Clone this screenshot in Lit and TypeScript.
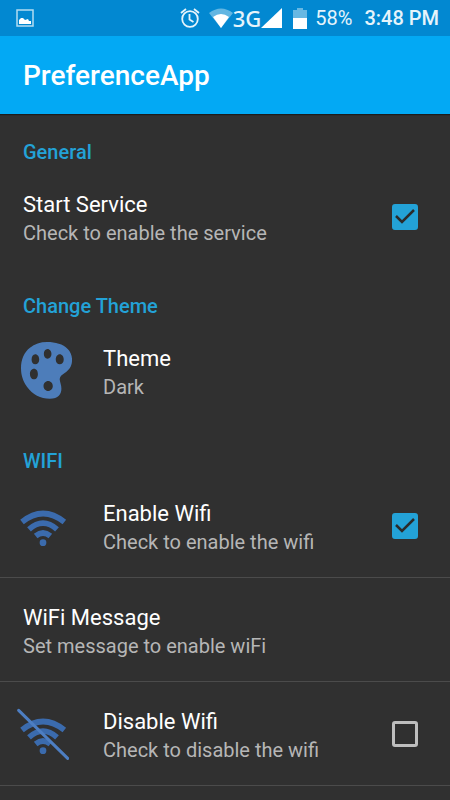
import { LitElement, html, css, nothing, svg } from "lit";
import { customElement, property } from "lit/decorators.js";

const paletteIcon = html`<svg class="palette" viewBox="33 38 154 171" preserveAspectRatio="none" aria-hidden="true">
  <path fill="#4d7dba" fill-rule="evenodd" d="M112 38C137 38 160 44 174 59C184 69 188 82 187 96C186 112 177 124 165 131C155 137 149 143 150 151C151 160 155 166 155 178C155 194 146 208 120 208C92 208 68 196 51 172C38 154 33 136 33 116C33 91 42 69 60 55C74 44 91 38 112 38Z
  M113 59C106 59 102 66 102 74C102 82 106 88 113 88C120 88 125 82 125 74C125 66 120 59 113 59Z
  M76 75C69 75 65 82 65 91C65 99 69 105 76 105C83 105 88 99 88 91C88 82 83 75 76 75Z
  M150 75C143 75 138 82 138 91C138 99 143 105 150 105C157 105 162 99 162 91C162 82 157 75 150 75Z
  M72 118C65 118 60 125 60 134C60 143 65 150 72 150C80 150 84 143 84 134C84 125 80 118 72 118Z
  M115 155C107 155 101 162 101 170C101 178 107 185 115 185C123 185 129 178 129 170C129 162 123 155 115 155Z"/>
</svg>`;

const wifiShape = svg`<g fill="none" stroke="#3b6bad" stroke-width="17">
    <path d="M36 95Q99 44 163 95"/>
    <path d="M57 117Q99 80 141 117"/>
    <path d="M77 137Q99 119 121 137"/>
  </g>
  <circle cx="99" cy="157" r="10" fill="#3b6bad"/>`;

const wifiIcon = html`<svg class="wifi" viewBox="21 29 156 156" aria-hidden="true">${wifiShape}</svg>`;

const wifiOffIcon = html`<svg class="wifi" viewBox="21 24 156 156" aria-hidden="true">
  <g transform="translate(0 -5)">${wifiShape}</g>
  <path d="M26 31L173 175" stroke="#4d7ec2" stroke-width="9" stroke-linecap="round"/>
</svg>`;

const icons = { palette: paletteIcon, wifi: wifiIcon, "wifi-off": wifiOffIcon };

@customElement("preference-row")
class PreferenceRow extends LitElement {
  @property() heading = "";
  @property() summary = "";
  @property() icon: keyof typeof icons | "" = "";
  @property({ type: Boolean }) checkable = false;
  @property({ type: Boolean }) checked = false;

  static styles = css`
    :host { display: block; }
    .row {
      box-sizing: border-box;
      width: 100%;
      min-height: 103px;
      padding: 0 32px 0 23px;
      display: flex;
      align-items: center;
      border: 0;
      background: none;
      color: inherit;
      font: inherit;
      text-align: left;
    }
    .icon { flex: none; width: 80px; display: flex; }
    .palette { width: 51px; height: 57px; margin-left: -2px; }
    .wifi { width: 52px; height: 52px; margin-left: -6px; }
    .text { flex: 1; display: flex; flex-direction: column; padding-top: 4px; }
    .heading { font-size: 22px; line-height: 29px; color: #fff; }
    .summary { font-size: 20px; line-height: 28px; color: #b6b6b6; }
    .box {
      appearance: none;
      box-sizing: border-box;
      width: 26px;
      height: 26px;
      margin: 0;
      border: 3px solid #bebebe;
      border-radius: 3px;
    }
    .box:checked { border-color: #23a2d7; background: #23a2d7; }
    .control { display: grid; place-items: center; }
    .control > * { grid-area: 1 / 1; }
    .tick { width: 26px; height: 26px; pointer-events: none; visibility: hidden; }
    .box:checked + .tick { visibility: visible; }
  `;

  render() {
    const content = html`
      ${this.icon ? html`<span class="icon">${icons[this.icon]}</span>` : nothing}
      <span class="text">
        <span class="heading">${this.heading}</span>
        <span class="summary">${this.summary}</span>
      </span>`;
    if (!this.checkable) return html`<button class="row">${content}</button>`;
    return html`<label class="row">
      ${content}
      <span class="control">
        <input class="box" type="checkbox" .checked=${this.checked} />
        <svg class="tick" viewBox="0 0 26 26" aria-hidden="true">
          <path d="M4 12L10 18L22 6" fill="none" stroke="#2b2b2b" stroke-width="2.5"/>
        </svg>
      </span>
    </label>`;
  }
}

@customElement("status-bar")
class StatusBar extends LitElement {
  static styles = css`
    :host {
      display: flex;
      align-items: center;
      box-sizing: border-box;
      height: 36px;
      padding: 0 11px 0 16px;
      background: #0288d1;
      color: #e6f4fb;
    }
    svg { flex: none; display: block; }
    .picture { width: 18px; height: 18px; margin-right: auto; }
    .alarm { width: 20px; height: 20px; margin-right: 9px; }
    .wifi { width: 24px; height: 20px; }
    .network { font: 500 22px/36px "Noto Sans", sans-serif; }
    .signal { width: 21px; height: 20px; margin-right: 11px; }
    .battery { width: 14px; height: 21px; margin-right: 8px; }
    .percent { font-size: 20px; line-height: 36px; margin-right: 12px; }
    .time { font-size: 20px; line-height: 36px; font-weight: 500; }
  `;

  render() {
    return html`
      <svg class="picture" viewBox="0 0 18 18" aria-hidden="true">
        <rect x="1" y="1" width="16" height="16" fill="none" stroke="#b3dbf1" stroke-width="1.5"/>
        <path d="M3 15V11L5 9L7 9L9 11L12 10L13 12L15 12V15Z" fill="#fff"/>
      </svg>
      <svg class="alarm" viewBox="0 0 20 20" fill="none" stroke="#e6f4fb" stroke-width="1.8" aria-hidden="true">
        <circle cx="10" cy="11" r="7.8"/>
        <path d="M9.500 6V11.500L13.500 14M1 5L6 1M14 1L19 5"/>
      </svg>
      <svg class="wifi" viewBox="0 0 24 20" aria-hidden="true">
        <path d="M0 5Q12 -4 24 5L12 20Z" fill="#62b6e2"/>
        <path d="M4 9Q12 3 20 9L12 20Z" fill="#fff"/>
      </svg>
      <span class="network">3G</span>
      <svg class="signal" viewBox="0 0 21 20" aria-hidden="true"><path d="M21 0V20H0Z" fill="#fff"/></svg>
      <svg class="battery" viewBox="0 0 14 21" aria-hidden="true">
        <path d="M0 2H4V0H10V2H14V10H0Z" fill="#67b8e3"/>
        <path d="M0 10H14V21H0Z" fill="#fff"/>
      </svg>
      <span class="percent">58%</span>
      <span class="time">3:48 PM</span>`;
  }
}

@customElement("app-root")
class AppRoot extends LitElement {
  static styles = css`
    :host {
      display: block;
      min-height: 100vh;
      background: #303030;
      color: #fff;
      font-family: Roboto, sans-serif;
    }
    .app-bar {
      display: flex;
      align-items: center;
      box-sizing: border-box;
      height: 78px;
      padding: 2px 23px 0;
      background: #03a9f4;
      box-shadow: 0 1px 1px #1c1c1c;
    }
    h1 { margin: 0; font-size: 28px; line-height: 36px; font-weight: 500; }
    h2 {
      margin: 0;
      padding: 25px 23px 0;
      font-size: 20px;
      line-height: 26px;
      font-weight: 500;
      color: #23a2d7;
    }
    section:last-child { padding-top: 1px; }
    .divided { border-bottom: 1px solid #4b4b4b; }
  `;

  render() {
    return html`
      <status-bar></status-bar>
      <header class="app-bar"><h1>PreferenceApp</h1></header>
      <main>
        <section>
          <h2>General</h2>
          <preference-row heading="Start Service" summary="Check to enable the service" checkable checked></preference-row>
        </section>
        <section>
          <h2>Change Theme</h2>
          <preference-row icon="palette" heading="Theme" summary="Dark"></preference-row>
        </section>
        <section>
          <h2>WIFI</h2>
          <preference-row class="divided" icon="wifi" heading="Enable Wifi" summary="Check to enable the wifi" checkable checked></preference-row>
          <preference-row class="divided" heading="WiFi Message" summary="Set message to enable wiFi"></preference-row>
          <preference-row class="divided" icon="wifi-off" heading="Disable Wifi" summary="Check to disable the wifi" checkable></preference-row>
        </section>
      </main>`;
  }
}
